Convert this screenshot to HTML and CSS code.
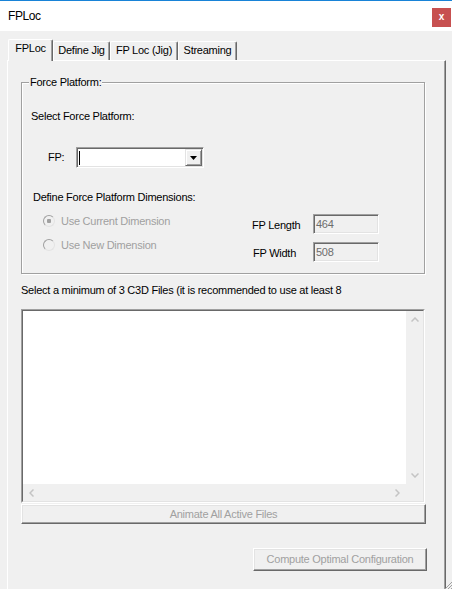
FILE: index.html
```html
<!DOCTYPE html>
<html>
<head>
<meta charset="utf-8">
<link rel="stylesheet" href="styles.css">
</head>
<body>
<div class="window">
  <div class="titlebar">
    <span class="title">FPLoc</span>
    <span class="close">x</span>
  </div>
  <div class="client">
    <div class="tabs">
      <div class="tab active t1">FPLoc</div>
      <div class="tab t2">Define Jig</div>
      <div class="tab t3">FP Loc (Jig)</div>
      <div class="tab t4">Streaming</div>
    </div>
    <div class="page">
      <div class="group">
        <span class="legend">Force Platform:</span>
        <div class="sel-label">Select Force Platform:</div>
        <div class="fp-row">
          <span class="fp-label">FP:</span>
          <div class="combo">
            <span class="caret"></span>
            <span class="drop"><svg width="7" height="4" viewBox="0 0 7 4"><path d="M0 0H7L3.5 4Z" fill="#000"/></svg></span>
          </div>
        </div>
        <div class="dim-label">Define Force Platform Dimensions:</div>
        <div class="dims">
          <div class="radios">
            <div class="radio-row"><span class="radio checked"></span><span class="dis">Use Current Dimension</span></div>
            <div class="radio-row"><span class="radio"></span><span class="dis">Use New Dimension</span></div>
          </div>
          <div class="fields">
            <div class="field-row"><span class="field-label">FP Length</span><span class="field">464</span></div>
            <div class="field-row"><span class="field-label w">FP Width</span><span class="field">508</span></div>
          </div>
        </div>
      </div>
      <div class="files-label">Select a minimum of 3 C3D Files (it is recommended to use at least 8</div>
      <div class="listbox">
        <div class="lb-inner">
          <div class="lb-area"></div>
          <div class="vscroll">
            <span class="arrow"><svg width="8" height="5" viewBox="0 0 8 5"><path d="M0.5 4.5L4 1L7.5 4.5" fill="none" stroke="#c4c4c4" stroke-width="1.5"/></svg></span>
            <span class="arrow"><svg width="8" height="5" viewBox="0 0 8 5"><path d="M0.5 0.5L4 4L7.5 0.5" fill="none" stroke="#c4c4c4" stroke-width="1.5"/></svg></span>
          </div>
          <div class="hscroll">
            <span class="arrow"><svg width="5" height="8" viewBox="0 0 5 8"><path d="M4.5 0.5L1 4L4.5 7.5" fill="none" stroke="#c4c4c4" stroke-width="1.5"/></svg></span>
            <span class="arrow"><svg width="5" height="8" viewBox="0 0 5 8"><path d="M0.5 0.5L4 4L0.5 7.5" fill="none" stroke="#c4c4c4" stroke-width="1.5"/></svg></span>
          </div>
          <div class="corner"></div>
        </div>
      </div>
      <div class="btn wide">Animate All Active Files</div>
      <div class="btn compute">Compute Optimal Configuration</div>
    </div>
  </div>
  <svg class="grip" width="7" height="14" viewBox="0 0 7 14">
    <path d="M0 14L7 7M3 14L7 10M6 14L7 13" stroke="#a0a0a0" stroke-width="1"/>
  </svg>
</div>
</body>
</html>
```

FILE: styles.css
```css
html, body {
  margin: 0;
  padding: 0;
}
body {
  background: #f0f0f0;
  font-family: "Liberation Sans", Arial, sans-serif;
  font-size: 11px;
  letter-spacing: -0.25px;
  color: #000;
}
.window {
  position: relative;
  width: 452px;
  height: 589px;
  overflow: hidden;
  background: #f0f0f0;
}
.titlebar {
  height: 30px;
  border-top: 1px solid #1883d7;
  background: #fff;
  display: flex;
  align-items: flex-start;
  padding-left: 8px;
}
.title {
  font-size: 12px;
  letter-spacing: -0.4px;
  line-height: 14px;
  margin-top: 8px;
}
.close {
  margin-left: auto;
  margin-right: 1px;
  margin-top: 7px;
  width: 19px;
  height: 19px;
  background: #c75050;
  color: #fff;
  font-weight: bold;
  font-size: 10px;
  line-height: 18px;
  text-align: center;
  letter-spacing: 0;
}
.client {
  padding: 8px 0 0 7px;
}
.tabs {
  display: flex;
  align-items: flex-end;
  height: 21px;
  padding-left: 1px;
}
.tab {
  box-sizing: border-box;
  height: 19px;
  border-top: 1px solid #fff;
  border-left: 1px solid #fff;
  border-right: 1px solid #696969;
  box-shadow: inset -1px 0 0 #a0a0a0;
  border-radius: 2px 2px 0 0;
  padding-top: 2px;
  line-height: 13px;
  text-align: center;
  white-space: nowrap;
}
.tab.active {
  position: relative;
  z-index: 1;
  height: 22px;
  margin-bottom: -1px;
  background: #f0f0f0;
}
.t1 { width: 45px; }
.t2 { width: 57px; }
.t3 { width: 68px; }
.t4 { width: 59px; }
.page {
  box-sizing: border-box;
  width: 439px;
  height: 560px;
  border-top: 1px solid #fff;
  border-left: 1px solid #fff;
  border-right: 1px solid #696969;
  box-shadow: inset -1px 0 0 #a0a0a0;
  display: flex;
  flex-direction: column;
  align-items: flex-start;
}
.group {
  position: relative;
  box-sizing: border-box;
  width: 404px;
  height: 192px;
  margin: 21px 0 0 13px;
  border: 1px solid #a0a0a0;
  box-shadow: inset 1px 1px 0 #fff, 1px 1px 0 #fff;
}
.legend {
  position: absolute;
  top: -7px;
  left: 7px;
  padding: 0 1px;
  background: #f0f0f0;
  line-height: 13px;
}
.sel-label {
  margin: 27px 0 0 9px;
  line-height: 13px;
}
.fp-row {
  display: flex;
  align-items: center;
  margin-top: 24px;
}
.fp-label {
  margin-left: 26px;
  width: 28px;
  line-height: 13px;
}
.combo {
  box-sizing: border-box;
  width: 128px;
  height: 21px;
  border: 1px solid;
  border-color: #a0a0a0 #fff #fff #a0a0a0;
  box-shadow: inset 1px 1px 0 #696969, inset -1px -1px 0 #e3e3e3;
  background: #fff;
  display: flex;
  align-items: center;
  justify-content: space-between;
}
.caret {
  width: 1px;
  height: 14px;
  background: #000;
  margin-left: 2px;
}
.drop {
  box-sizing: border-box;
  width: 17px;
  height: 17px;
  margin-right: 1px;
  background: #f0f0f0;
  border: 1px solid;
  border-color: #e3e3e3 #696969 #696969 #e3e3e3;
  box-shadow: inset 1px 1px 0 #fff, inset -1px -1px 0 #a0a0a0;
  display: flex;
  align-items: center;
  justify-content: center;
}
.dim-label {
  margin: 23px 0 0 11px;
  line-height: 13px;
}
.dims {
  display: flex;
  margin-top: 8px;
}
.radios {
  width: 209px;
  margin-left: 21px;
  display: flex;
  flex-direction: column;
  gap: 6px;
}
.radio-row {
  display: flex;
  align-items: center;
  height: 18px;
}
.radio {
  box-sizing: border-box;
  width: 12px;
  height: 12px;
  border-radius: 50%;
  border: 1px solid;
  border-color: #a0a0a0 #e3e3e3 #e3e3e3 #a0a0a0;
  background: #f0f0f0;
  margin-right: 6px;
}
.radio.checked {
  background: radial-gradient(circle, #a0a0a0 0 2px, #f0f0f0 2.5px);
}
.dis {
  color: #a0a0a0;
  line-height: 13px;
}
.fields {
  display: flex;
  flex-direction: column;
  gap: 8px;
  margin-top: 2px;
}
.field-row {
  display: flex;
  align-items: center;
  height: 20px;
}
.field-label {
  width: 61px;
  line-height: 13px;
  margin-top: 2px;
}
.field-label.w {
  box-sizing: border-box;
  padding-left: 1px;
}
.field {
  box-sizing: border-box;
  width: 66px;
  height: 20px;
  border: 1px solid;
  border-color: #a0a0a0 #fff #fff #a0a0a0;
  box-shadow: inset 1px 1px 0 #696969, inset -1px -1px 0 #e3e3e3;
  background: #f0f0f0;
  color: #6d6d6d;
  padding-left: 2px;
  line-height: 18px;
}
.files-label {
  margin: 9px 0 0 13px;
  line-height: 14px;
  white-space: nowrap;
}
.listbox {
  box-sizing: border-box;
  width: 404px;
  height: 194px;
  margin: 12px 0 0 13px;
  border: 1px solid;
  border-color: #a0a0a0 #fff #fff #a0a0a0;
}
.lb-inner {
  box-sizing: border-box;
  height: 100%;
  border: 1px solid;
  border-color: #696969 #e3e3e3 #e3e3e3 #696969;
  display: grid;
  grid-template-columns: 1fr 17px;
  grid-template-rows: 1fr 17px;
}
.lb-area {
  background: #fff;
}
.vscroll {
  background: #f0f0f0;
  display: flex;
  flex-direction: column;
  justify-content: space-between;
}
.hscroll {
  background: #f0f0f0;
  display: flex;
  justify-content: space-between;
}
.corner {
  background: #f0f0f0;
}
.arrow {
  width: 17px;
  height: 17px;
  display: flex;
  align-items: center;
  justify-content: center;
}
.btn {
  box-sizing: border-box;
  border: 1px solid;
  border-color: #fff #696969 #696969 #fff;
  box-shadow: inset -1px -1px 0 #a0a0a0, inset 1px 1px 0 #e3e3e3;
  color: #a0a0a0;
  text-align: center;
  white-space: nowrap;
}
.btn.wide {
  width: 405px;
  height: 20px;
  margin: 1px 0 0 13px;
  line-height: 18px;
}
.btn.compute {
  width: 174px;
  height: 23px;
  margin: 24px 0 0 245px;
  line-height: 21px;
}
.grip {
  position: absolute;
  right: 0;
  bottom: 0;
}
```
